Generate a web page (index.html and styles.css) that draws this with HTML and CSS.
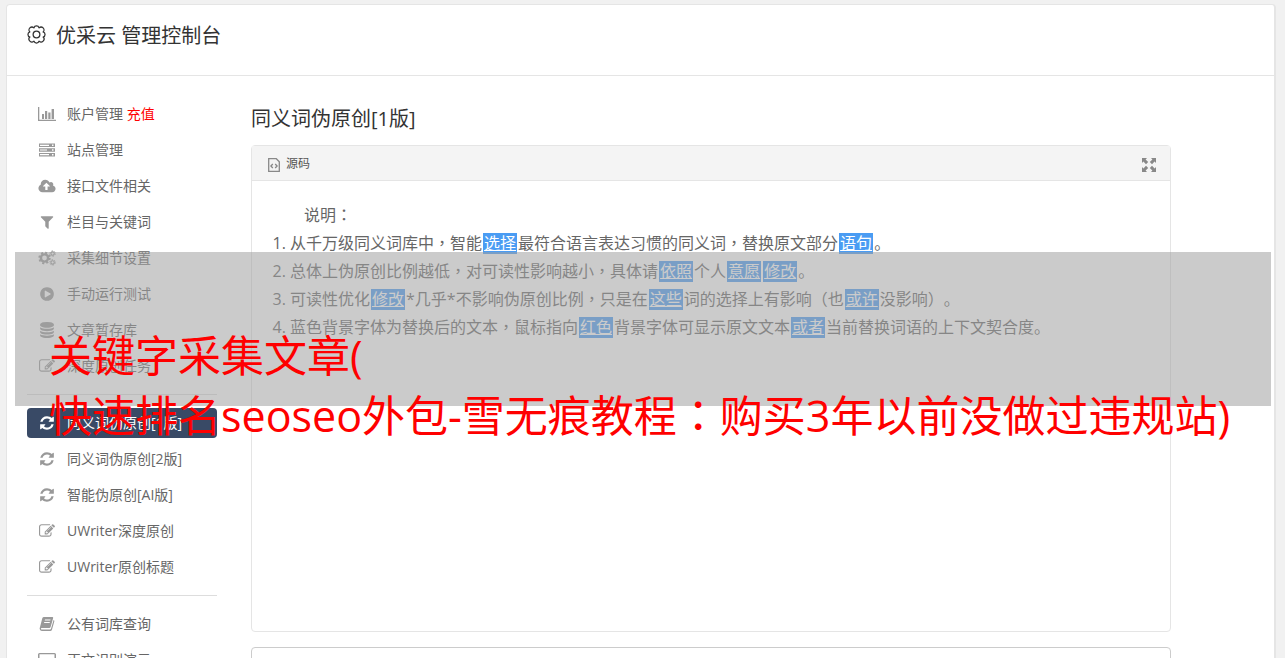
FILE: index.html
```html
<!DOCTYPE html>
<html lang="zh-CN">
<head>
<meta charset="utf-8">
<meta name="viewport" content="width=device-width, initial-scale=1">
<title>优采云 管理控制台</title>
<link rel="stylesheet" href="styles.css">
</head>
<body>
<svg class="sprite" aria-hidden="true">
  <symbol id="i-chart" viewBox="0 0 18 16"><path d="M0 1h1.3v12.700H18V15H0zM4 8h2v5H4zM7 5h2.200v8H7zM10.300 6.500h2.200V13h-2.200zM13.600 3h2.400v10h-2.400z"/></symbol>
  <symbol id="i-server" viewBox="0 0 18 16"><path fill-rule="evenodd" d="M1 1.500h16v3.600H1zM2 2.700v1.200h9V2.700zM14 2.500v1.600h1.500V2.500zM1 6.200h16v3.600H1zM2 7.400v1.200h7V7.400zM14 7.200v1.600h1.500V7.200zM1 10.900h16v3.600H1zM2 12.100v1.200h9v-1.200zM14 11.900v1.600h1.500v-1.600z"/></symbol>
  <symbol id="i-cloud" viewBox="0 0 1920 1792"><path d="M1280 928q0-14-9-23l-352-352q-9-9-23-9t-23 9l-351 351q-10 12-10 24 0 14 9 23t23 9h224v352q0 13 9.500 22.500t22.500 9.500h192q13 0 22.500-9.500t9.500-22.500v-352h224q13 0 22.500-9.500t9.500-22.500zm640 288q0 159-112.500 271.500t-271.500 112.500h-1088q-185 0-316.500-131.500t-131.500-316.500q0-130 70-240t188-165q-2-30-2-43 0-212 150-362t362-150q156 0 285.500 87t188.500 231q71-62 166-62 106 0 181 75t75 181q0 76-41 138 130 31 213.500 135.500t83.500 238.500z"/></symbol>
  <symbol id="i-filter" viewBox="0 0 1792 1792"><path d="M1595 295q17 41-14 70l-493 493v742q0 42-39 59-13 5-25 5-27 0-45-19l-256-256q-19-19-19-45v-486l-493-493q-31-29-14-70 17-39 59-39h1280q42 0 59 39z"/></symbol>
  <symbol id="i-cogs" viewBox="0 0 18 16"><g fill="none" stroke="currentColor"><circle cx="6.500" cy="8" r="3.600" stroke-width="2.400"/><circle cx="6.500" cy="8" r="5.300" stroke-width="1.800" stroke-dasharray="2.100 2.062"/><circle cx="14.600" cy="3.600" r="1.700" stroke-width="1.100"/><circle cx="14.600" cy="3.600" r="2.700" stroke-width="1" stroke-dasharray="1.400 1.427"/><circle cx="14.600" cy="12.400" r="1.700" stroke-width="1.100"/><circle cx="14.600" cy="12.400" r="2.700" stroke-width="1" stroke-dasharray="1.400 1.427"/></g></symbol>
  <symbol id="i-play" viewBox="0 0 1792 1792"><path d="M896 128q209 0 385.500 103t279.500 279.500 103 385.500-103 385.500-279.500 279.500-385.500 103-385.500-103-279.500-279.500-103-385.500 103-385.500 279.500-279.500 385.500-103zm384 823q32-18 32-55t-32-55l-544-320q-31-19-64-1-32 19-32 56v640q0 37 32 56 16 8 32 8 17 0 32-9z"/></symbol>
  <symbol id="i-db" viewBox="0 0 1792 1792"><path d="M896 768q237 0 443-43t325-127v170q0 69-103 128t-280 93.500-385 34.500-385-34.500-280-93.500-103-128v-170q119 84 325 127t443 43zm0 768q237 0 443-43t325-127v170q0 69-103 128t-280 93.500-385 34.500-385-34.500-280-93.500-103-128v-170q119 84 325 127t443 43zm0-384q237 0 443-43t325-127v170q0 69-103 128t-280 93.500-385 34.500-385-34.500-280-93.500-103-128v-170q119 84 325 127t443 43zm0-1152q208 0 385 34.500t280 93.500 103 128v128q0 69-103 128t-280 93.500-385 34.500-385-34.500-280-93.500-103-128v-128q0-69 103-128t280-93.500 385-34.500z"/></symbol>
  <symbol id="i-edit" viewBox="0 0 1792 1792"><path d="M888 1184l116-116-152-152-116 116v56h96v96h56zm440-720q-16-16-33 1l-350 350q-17 17-1 33t33-1l350-350q17-17 1-33zm80 594v190q0 119-84.500 203.500t-203.500 84.500h-832q-119 0-203.500-84.500t-84.500-203.500v-832q0-119 84.500-203.500t203.500-84.500h832q63 0 117 25 15 7 18 23 3 17-9 29l-49 49q-14 14-32 8-23-6-45-6h-832q-66 0-113 47t-47 113v832q0 66 47 113t113 47h832q66 0 113-47t47-113v-126q0-13 9-22l64-64q15-15 35-7t20 29zm-96-738l288 288-672 672h-288v-288zm444 132l-92 92-288-288 92-92q28-28 68-28t68 28l152 152q28 28 28 68t-28 68z"/></symbol>
  <symbol id="i-refresh" viewBox="0 0 1792 1792"><path d="M1639 1056q0 5-1 7-64 268-268 434.500t-478 166.500q-146 0-282.500-55t-243.500-157l-129 129q-19 19-45 19t-45-19-19-45v-448q0-26 19-45t45-19h448q26 0 45 19t19 45-19 45l-137 137q71 66 161 102t187 36q134 0 250-65t186-179q11-17 53-117 8-23 30-23h192q13 0 22.500 9.500t9.500 22.500zm25-800v448q0 26-19 45t-45 19h-448q-26 0-45-19t-19-45 19-45l138-138q-148-137-349-137-134 0-250 65t-186 179q-11 17-53 117-8 23-30 23h-199q-13 0-22.500-9.500t-9.500-22.500v-7q65-268 270-434.500t480-166.500q146 0 284 55.500t245 156.500l130-129q19-19 45-19t45 19 19 45z"/></symbol>
  <symbol id="i-book" viewBox="0 0 16 16"><path fill-rule="evenodd" d="M5 1h8.300q1.200 0 .8 1.300L11.600 11q-.3 1-1.300 1H2.600q-.8 0-.6.900.2.600 1 .600h8q.8 0 1-.7L14.600 4q1 .4.700 1.400L13 13.500q-.4 1.500-1.800 1.500H2.800Q.6 15 .6 12.600L3.300 2.300Q3.700 1 5 1zM6 3.600l-.3 1h5.600l.3-1zM5.300 6L5 7h5.600l.3-1z"/></symbol>
  <symbol id="i-desktop" viewBox="0 0 18 16"><path fill-rule="evenodd" d="M1.500 1h15Q18 1 18 2.500v9q0 1.500-1.500 1.500H11v1.500h2v1H5v-1h2V13H1.500Q0 13 0 11.500v-9Q0 1 1.500 1zm0 1.300v8.200h15V2.300z"/></symbol>
  <symbol id="i-gear" viewBox="-9 -9 18 18"><g fill="none" stroke="currentColor" stroke-width="1.200"><path stroke-linejoin="round" d="M-2.400-6.300A2.500 2.500 0 0 1 2.400-6.300 2.500 2.500 0 0 1 6.300-2.400 2.500 2.500 0 0 1 6.300 2.400 2.500 2.500 0 0 1 2.400 6.300 2.500 2.500 0 0 1-2.400 6.300 2.500 2.500 0 0 1-6.300 2.400 2.500 2.500 0 0 1-6.300-2.400 2.500 2.500 0 0 1-2.400-6.300z"/><circle r="3.200"/></g></symbol>
  <symbol id="i-source" viewBox="0 0 12 14"><path fill="none" stroke="currentColor" stroke-width="1.300" d="M.7.700h7.600l3 3v9.600H.7zM4.800 6L2.900 8l1.900 2M7.200 6l1.900 2-1.900 2"/></symbol>
  <symbol id="i-expand" viewBox="0 0 14 14"><path d="M0 0h5L3.600 1.400 6.200 4 4 6.200 1.400 3.600 0 5zM14 0v5l-1.400-1.400L10 6.200 7.800 4l2.600-2.600L9 0zM0 14V9l1.400 1.400L4 7.800 6.200 10l-2.600 2.600L5 14zM14 14H9l1.400-1.400L7.800 10 10 7.800l2.600 2.600L14 9z"/></symbol>
</svg>

<div class="app">
  <header class="app-header">
    <svg class="gear"><use href="#i-gear"/></svg>
    <h1 class="brand">优采云 管理控制台</h1>
  </header>
  <div class="columns">
    <nav class="side">
      <a class="item" href="#"><svg class="icon"><use href="#i-chart"/></svg><span>账户管理 <span class="recharge">充值</span></span></a>
      <a class="item" href="#"><svg class="icon"><use href="#i-server"/></svg>站点管理</a>
      <a class="item" href="#"><svg class="icon"><use href="#i-cloud"/></svg>接口文件相关</a>
      <a class="item" href="#"><svg class="icon"><use href="#i-filter"/></svg>栏目与关键词</a>
      <a class="item" href="#"><svg class="icon"><use href="#i-cogs"/></svg>采集细节设置</a>
      <a class="item" href="#"><svg class="icon"><use href="#i-play"/></svg>手动运行测试</a>
      <a class="item" href="#"><svg class="icon"><use href="#i-db"/></svg>文章暂存库</a>
      <a class="item" href="#"><svg class="icon"><use href="#i-edit"/></svg>深度原创任务</a>
      <hr class="rule">
      <a class="item active" href="#"><svg class="icon"><use href="#i-refresh"/></svg>同义词伪原创[1版]</a>
      <a class="item" href="#"><svg class="icon"><use href="#i-refresh"/></svg>同义词伪原创[2版]</a>
      <a class="item" href="#"><svg class="icon"><use href="#i-refresh"/></svg>智能伪原创[AI版]</a>
      <a class="item" href="#"><svg class="icon"><use href="#i-edit"/></svg>UWriter深度原创</a>
      <a class="item" href="#"><svg class="icon"><use href="#i-edit"/></svg>UWriter原创标题</a>
      <hr class="rule">
      <a class="item" href="#"><svg class="icon"><use href="#i-book"/></svg>公有词库查询</a>
      <a class="item" href="#"><svg class="icon"><use href="#i-desktop"/></svg>正文识别演示</a>
    </nav>
    <main class="content">
      <h2 class="title">同义词伪原创[1版]</h2>
      <section class="editor">
        <div class="toolbar">
          <button class="tool" type="button"><svg class="source-icon"><use href="#i-source"/></svg>源码</button>
          <button class="tool" type="button" aria-label="全屏"><svg class="expand-icon"><use href="#i-expand"/></svg></button>
        </div>
        <div class="document">
          <p class="lead">说明<span class="mid" lang="zh-TW">：</span></p>
          <ol class="notes">
            <li>从千万级同义词库中<span class="mid" lang="zh-TW">，</span>智能<a class="word" href="#">选择</a>最符合语言表达习惯的同义词<span class="mid" lang="zh-TW">，</span>替换原文部分<a class="word" href="#">语句</a>。</li>
            <li>总体上伪原创比例越低<span class="mid" lang="zh-TW">，</span>对可读性影响越小<span class="mid" lang="zh-TW">，</span>具体请<a class="word" href="#">依照</a>个人<a class="word" href="#">意愿</a><a class="word" href="#">修改</a>。</li>
            <li>可读性优化<a class="word" href="#">修改</a>*几乎*不影响伪原创比例<span class="mid" lang="zh-TW">，</span>只是在<a class="word" href="#">这些</a>词的选择上有影响<span class="mid" lang="zh-TW">（</span>也<a class="word" href="#">或许</a>没影响<span class="mid" lang="zh-TW">）</span>。</li>
            <li>蓝色背景字体为替换后的文本<span class="mid" lang="zh-TW">，</span>鼠标指向<a class="word" href="#">红色</a>背景字体可显示原文文本<a class="word" href="#">或者</a>当前替换词语的上下文契合度。</li>
          </ol>
        </div>
      </section>
      <textarea class="result" aria-label="原文"></textarea>
    </main>
  </div>
</div>

<div class="caption">
  <div class="band"></div>
  <p class="caption-text">关键字采集文章(<br>快速排名seoseo外包-雪无痕教程<span class="mid" lang="zh-TW">：</span>购买3年以前没做过违规站)</p>
</div>
</body>
</html>
```
FILE: styles.css
```css
* {
  box-sizing: border-box;
}

body {
  margin: 0;
  height: 100vh;
  overflow: hidden;
  background: #f1f1f1;
  color: #666;
  font-family: "Open Sans", "Noto Sans CJK SC", sans-serif;
  font-size: 14px;
  text-spacing-trim: space-all;
}

svg {
  fill: currentColor;
}

.sprite {
  display: none;
}

/* Punctuation centred in its full-width cell */
.mid {
  font-family: "Noto Sans CJK TC", sans-serif;
  line-height: 1;
}

.app {
  margin: 4px 9px 0 6px;
  background: #fff;
  border: 1px solid #e5e5e5;
  border-right-width: 2px;
  border-radius: 4px;
}

.app-header {
  display: flex;
  align-items: center;
  gap: 10px;
  height: 71px;
  padding: 0 20px 8px;
  border-bottom: 1px solid #e5e5e5;
  color: #333;
}

.gear {
  width: 19px;
  height: 19px;
  margin-bottom: 4px;
}

.brand,
.title {
  margin: 0;
  color: #333;
  font-size: 20px;
  font-weight: 400;
  line-height: 30px;
}

.columns {
  display: flex;
  gap: 34px;
  padding: 23px 103px 20px 20px;
}

.side {
  display: flex;
  flex-direction: column;
  gap: 6px;
  flex: 0 0 190px;
}

.item {
  display: flex;
  align-items: center;
  gap: 11px;
  height: 30px;
  padding: 0 0 2px 11px;
  border-radius: 4px;
  color: #666;
  text-decoration: none;
  white-space: nowrap;
}

.icon {
  width: 18px;
  height: 16px;
  margin-top: 2px;
  color: #999;
}

.recharge {
  color: #f00;
}

.active,
.active .icon {
  color: #fff;
}

.active {
  background: #394a66;
}

.rule {
  width: 100%;
  margin: 7px 0;
  border: 0;
  border-top: 1px solid #ddd;
}

.content {
  flex: 1;
  min-width: 0;
  padding-top: 5px;
}

.editor {
  margin: 11px 0 15px;
  border: 1px solid #e5e5e5;
  border-radius: 4px;
}

.toolbar {
  display: flex;
  align-items: center;
  justify-content: space-between;
  height: 35px;
  padding: 0 14px 0 16px;
  background: #f4f4f4;
  border-bottom: 1px solid #e5e5e5;
}

.tool {
  display: flex;
  align-items: center;
  gap: 6px;
  padding: 0;
  border: 0;
  background: none;
  color: #555;
  font: inherit;
  font-size: 12px;
}

.source-icon,
.expand-icon {
  height: 14px;
  margin-top: 3px;
  color: #888;
}

.source-icon {
  width: 12px;
}

.expand-icon {
  width: 14px;
}

.document {
  min-height: 450px;
  padding: 20px;
  font-size: 16px;
  line-height: 28px;
}

.lead {
  margin: 0;
  text-indent: 2em;
}

.notes {
  margin: 0;
  padding-left: 18px;
}

.word {
  display: inline-block;
  margin: 0 1px;
  padding: 0 1px;
  background: #4a9cf3;
  color: #fff;
  line-height: 21px;
}

.result {
  display: block;
  width: 100%;
  height: 120px;
  border: 1px solid #ccc;
  border-radius: 4px;
  resize: none;
}

/* Translucent caption laid over the console */
.caption {
  position: absolute;
  top: 252px;
  left: 15px;
  right: 14px;
  pointer-events: none;
}

.band {
  height: 154px;
  background: rgba(160, 160, 160, 0.55);
}

.caption-text {
  position: absolute;
  top: 74px;
  left: 34px;
  margin: 0;
  color: #f00;
  font-size: 43px;
  line-height: 60px;
  white-space: nowrap;
}
```
